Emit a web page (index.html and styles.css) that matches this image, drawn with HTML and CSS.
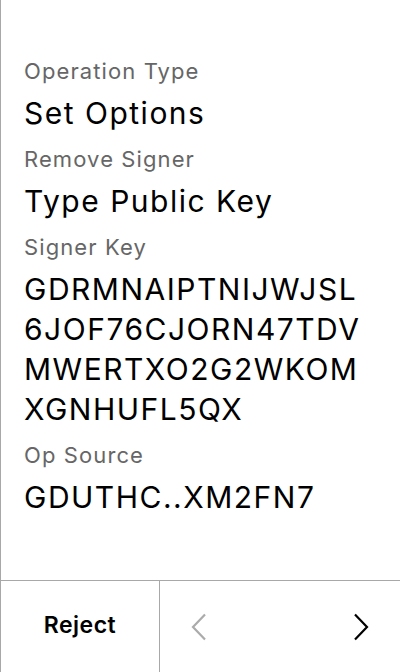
FILE: index.html
```html
<!DOCTYPE html>
<html>
<head>
<meta charset="utf-8">
<link rel="stylesheet" href="styles.css">
</head>
<body>
<div class="screen">
  <main class="content">
    <div class="field">
      <div class="label">Operation Type</div>
      <div class="value">Set Options</div>
    </div>
    <div class="field">
      <div class="label">Remove Signer</div>
      <div class="value">Type Public Key</div>
    </div>
    <div class="field">
      <div class="label">Signer Key</div>
      <div class="value">GDRMNAIPTNIJWJSL<br>6JOF76CJORN47TDV<br>MWERTXO2G2WKOM<br>XGNHUFL5QX</div>
    </div>
    <div class="field">
      <div class="label">Op Source</div>
      <div class="value">GDUTHC..XM2FN7</div>
    </div>
  </main>
  <footer class="footer">
    <div class="reject">Reject</div>
    <div class="nav">
      <svg class="chev" width="16" height="28" viewBox="0 0 16 28"><polyline points="14,1.5 2,14 14,26.5" fill="none" stroke="#ababab" stroke-width="2.2"/></svg>
      <svg class="chev" width="16" height="28" viewBox="0 0 16 28"><polyline points="2,1.5 14,14 2,26.5" fill="none" stroke="#000" stroke-width="2.2"/></svg>
    </div>
  </footer>
</div>
</body>
</html>
```
FILE: styles.css
```css
html, body {
  margin: 0;
  padding: 0;
  background: #fff;
}
body {
  font-family: Inter, "Noto Sans", sans-serif;
  color: #000;
}
.screen {
  width: 400px;
  height: 672px;
  box-sizing: border-box;
  border-left: 1px solid #a8a8a8;
  display: flex;
  flex-direction: column;
}
.content {
  flex: 1;
  padding: 57px 0 0 23px;
  display: flex;
  flex-direction: column;
  gap: 12px;
}
.field {
  display: flex;
  flex-direction: column;
  gap: 8px;
}
.label {
  font-size: 22px;
  line-height: 28px;
  letter-spacing: 1.1px;
  color: #666;
}
.value {
  font-size: 30px;
  line-height: 40px;
  letter-spacing: 1.5px;
  color: #000;
}
.footer {
  height: 91px;
  border-top: 1px solid #a8a8a8;
  display: flex;
}
.reject {
  width: 159px;
  border-right: 1px solid #a8a8a8;
  display: flex;
  align-items: center;
  justify-content: center;
  font-size: 23px;
  font-weight: 600;
  letter-spacing: 0.5px;
  padding-bottom: 3px;
  box-sizing: border-box;
}
.nav {
  flex: 1;
  display: flex;
  align-items: center;
  justify-content: space-between;
  padding: 0 31px 0 31px;
}
.chev {
  display: block;
}
```
